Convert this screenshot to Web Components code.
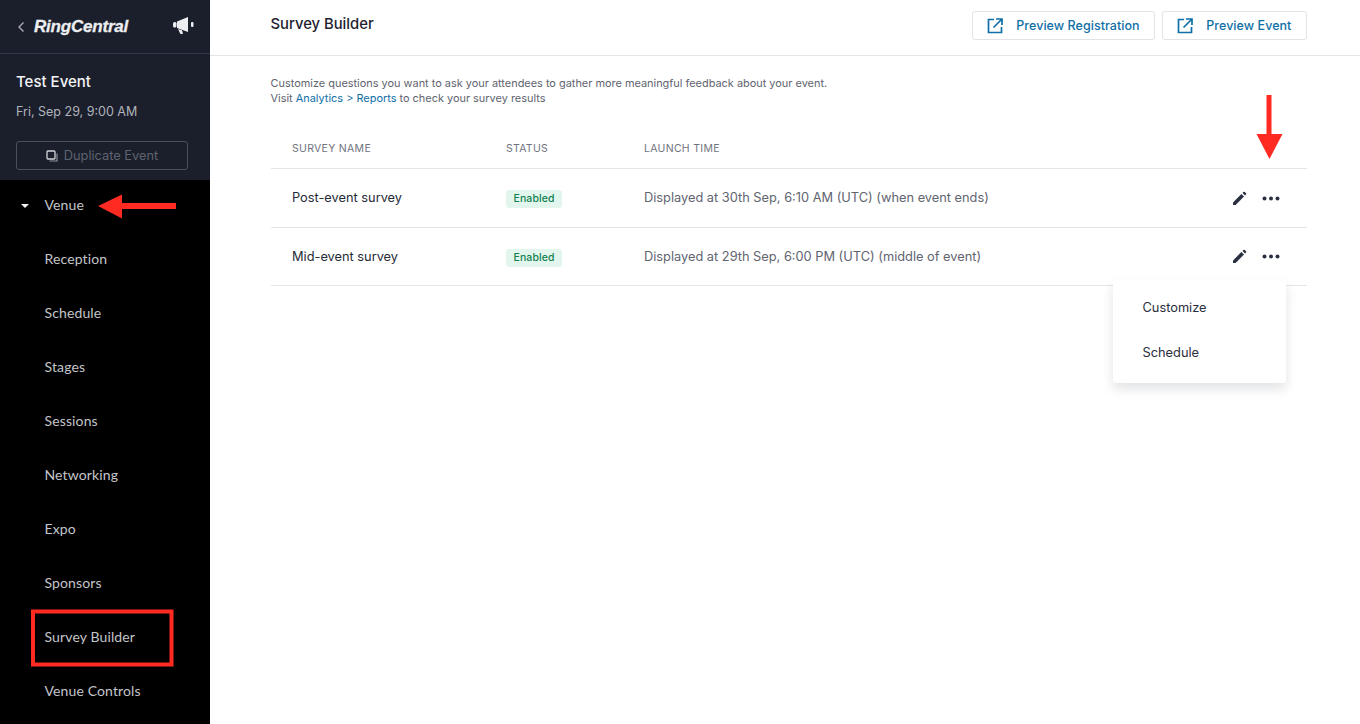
<!DOCTYPE html>
<html>
<head>
<meta charset="utf-8">
<title>Survey Builder</title>
<style>
    html, body { margin: 0; height: 100%; }
    body { font-family: Inter, "Liberation Sans", sans-serif; background: #fff; overflow: hidden; }
    app-shell { height: 724px; }
</style>
</head>
<body>
<app-shell>
    <side-bar slot="side">
        <nav-item caret>Venue</nav-item>
        <nav-item>Reception</nav-item>
        <nav-item>Schedule</nav-item>
        <nav-item>Stages</nav-item>
        <nav-item>Sessions</nav-item>
        <nav-item>Networking</nav-item>
        <nav-item>Expo</nav-item>
        <nav-item>Sponsors</nav-item>
        <nav-item>Survey Builder</nav-item>
        <nav-item>Venue Controls</nav-item>
    </side-bar>
    <top-bar heading="Survey Builder">
        <preview-button>Preview Registration</preview-button>
        <preview-button>Preview Event</preview-button>
    </top-bar>
    <survey-page>
        <survey-row name="Post-event survey" time="Displayed at 30th Sep, 6:10 AM (UTC) (when event ends)"></survey-row>
        <survey-row name="Mid-event survey" time="Displayed at 29th Sep, 6:00 PM (UTC) (middle of event)"></survey-row>
    </survey-page>
    <red-marks slot="marks"></red-marks>
</app-shell>

<script>
// Page frame
class AppShell extends HTMLElement {
    constructor() {
        super();
        this.attachShadow({ mode: 'open' }).innerHTML = `
            <style>
                :host { display: flex; position: relative; overflow: hidden; }
                main { flex: 1; min-width: 0; display: flex; flex-direction: column; }
            </style>
            <slot name="side"></slot>
            <main><slot></slot></main>
            <slot name="marks"></slot>
        `;
    }
}

class SideBar extends HTMLElement {
    constructor() {
        super();
        this.attachShadow({ mode: 'open' }).innerHTML = `
            <style>
                :host { display: flex; flex-direction: column; width: 210px; flex: none; height: 724px; background: #000; overflow: hidden; }
                .head { background: #1b1f2b; height: 180px; box-sizing: border-box; display: flex; flex-direction: column; }
                .brand { height: 54px; box-sizing: border-box; border-bottom: 1px solid #33374a; display: flex; align-items: center; padding: 0 11px 0 17px; }
                .back { width: 8px; height: 14px; margin-right: 9px; }
                .logo { font: italic 700 17px "Liberation Sans", sans-serif; letter-spacing: -0.2px; -webkit-text-stroke: 0.3px #eceef1; color: #eceef1; flex: 1; }
                .horn { width: 22px; height: 18px; margin: -4px 5px 0 0; }
                .info { padding: 0 22px 0 16px; }
                h2 { margin: 18px 0 0; font: 500 15px/20px Inter, sans-serif; color: #f3f4f6; }
                .date { margin-top: 11px; font: 400 12.5px/18px Inter, sans-serif; color: #b0b3bb; }
                .dup { margin-top: 20px; height: 29px; box-sizing: border-box; border: 1px solid #4b4f5c; border-radius: 3px; display: flex; align-items: center; justify-content: center; gap: 6px; font: 400 12.8px Inter, sans-serif; color: #5f636f; }
                .dup svg { width: 12px; height: 12px; }
                nav { display: flex; flex-direction: column; gap: 4px; margin-top: -1px; }
            </style>
            <div class="head">
                <div class="brand">
                    <svg class="back" viewBox="0 0 8 14"><path d="M6.5 2.5 2 7l4.5 4.5" fill="none" stroke="#a9acb4" stroke-width="1.4"/></svg>
                    <span class="logo">RingCentral</span>
                    <svg class="horn" viewBox="0 0 22 18" fill="#eceef1"><rect x="1" y="6" width="3.500" height="5.500" rx="1.500"/><path d="M5 5.500 16 1v15L5 12z"/><path d="M6 13l4 1.300 1 3.500-2.500.3z"/><rect x="19" y="6" width="2.500" height="5" rx="1"/></svg>
                </div>
                <div class="info">
                    <h2>Test Event</h2>
                    <div class="date">Fri, Sep 29, 9:00 AM</div>
                    <div class="dup">
                        <svg viewBox="0 0 12 12"><rect x="1" y="1" width="8" height="8" rx="1" fill="none" stroke="#d4d6db" stroke-width="1.300"/><path d="M11 3.500V11H3.500" fill="none" stroke="#8d909a" stroke-width="1.200"/></svg>
                        <span>Duplicate Event</span>
                    </div>
                </div>
            </div>
            <nav><slot></slot></nav>
        `;
    }
}

class NavItem extends HTMLElement {
    constructor() {
        super();
        this.attachShadow({ mode: 'open' }).innerHTML = `
            <style>
                :host { display: flex; align-items: center; height: 50px; padding-left: 44.5px; position: relative; font: 400 14px Lato, sans-serif; letter-spacing: 0.13px; color: #c3c5ca; }
                .caret { position: absolute; left: 21px; top: 25px; width: 0; height: 0; border: 4px solid transparent; border-top: 4px solid #f2f2f2; border-bottom: 0; }
            </style>
            ${this.hasAttribute('caret') ? '<span class="caret"></span>' : ''}
            <slot></slot>
        `;
    }
}

class TopBar extends HTMLElement {
    constructor() {
        super();
        this.attachShadow({ mode: 'open' }).innerHTML = `
            <style>
                :host { display: flex; align-items: center; height: 56px; box-sizing: border-box; border-bottom: 1px solid #e5e5e7; padding: 0 53px 5px 60.500px; }
                h1 { flex: 1; margin: 0 0 3px; font: 500 14.800px/20px Inter, sans-serif; color: #1e2230; }
                .actions { display: flex; gap: 7px; margin-top: 1px; }
            </style>
            <h1>${this.getAttribute('heading')}</h1>
            <div class="actions"><slot></slot></div>
        `;
    }
}

class PreviewButton extends HTMLElement {
    constructor() {
        super();
        this.attachShadow({ mode: 'open' }).innerHTML = `
            <style>
                :host { display: flex; align-items: center; height: 29px; box-sizing: border-box; border: 1px solid #e1e3e6; border-radius: 3px; padding: 0 14.600px 0 14px; font: 500 12.5px Inter, sans-serif; letter-spacing: 0.05px; color: #0f6fa6; }
                svg { width: 16px; height: 16px; margin-right: 13px; }
            </style>
            <svg viewBox="0 0 16 16" fill="none" stroke="#0f6fa6" stroke-width="1.700"><path d="M7 1.500H1.500v13h13V9"/><path d="M6.500 9.500 14.500 1.500M9 1h6v6" /></svg>
            <slot></slot>
        `;
    }
}

class SurveyPage extends HTMLElement {
    constructor() {
        super();
        this.attachShadow({ mode: 'open' }).innerHTML = `
            <style>
                :host { display: block; padding: 20px 53px 0 60.500px; position: relative; }
                p { margin: 0; font: 400 10.930px/15px Inter, sans-serif; color: #61646f; }
                a { color: #0f6fa6; }
                .cols { display: grid; grid-template-columns: 214px 138px 1fr; padding-left: 21.500px; margin-top: 35px; height: 27px; border-bottom: 1px solid #e5e5e7; font: 400 10.500px/15px Inter, sans-serif; letter-spacing: 0.3px; color: #70737e; }
                .menu { position: absolute; left: 902.500px; top: 224px; width: 173px; height: 103px; box-sizing: border-box; padding: 5px 30px; background: #fff; border-radius: 3px; box-shadow: 0 6px 12px rgba(20,24,40,.12); font: 400 12.800px Inter, sans-serif; color: #2a2e3c; display: grid; grid-auto-rows: 45px; align-items: center; }
            </style>
            <p>Customize questions you want to ask your attendees to gather more meaningful feedback about your event.<br>Visit <a>Analytics &gt; Reports</a> to check your survey results</p>
            <div class="cols"><span>SURVEY NAME</span><span>STATUS</span><span>LAUNCH TIME</span></div>
            <slot></slot>
            <div class="menu"><span>Customize</span><span>Schedule</span></div>
        `;
    }
}

class SurveyRow extends HTMLElement {
    constructor() {
        super();
        this.attachShadow({ mode: 'open' }).innerHTML = `
            <style>
                :host { display: grid; grid-template-columns: 214px 138px 1fr auto; align-items: center; height: 58.500px; box-sizing: border-box; border-bottom: 1px solid #e5e5e7; padding: 0 27px 1px 21.500px; }
                :host(:last-of-type) { padding-top: 1px; padding-bottom: 0; }
                .name { font: 400 12.800px Inter, sans-serif; color: #262a37; }
                .badge { justify-self: start; margin-top: 4px; background: #e3f6ee; color: #11804f; font: 500 10.500px/18px Inter, sans-serif; padding: 0 7.500px; letter-spacing: 0.1px; border-radius: 3px; }
                :host(:last-of-type) .badge { margin-top: 2px; }
                .time { font: 400 12.800px Inter, sans-serif; color: #61646f; }
                .tools { display: flex; align-items: center; gap: 15px; margin-top: 2px; }
                :host(:last-of-type) .tools { margin-top: 0; }
                svg { display: block; }
            </style>
            <span class="name">${this.getAttribute('name')}</span>
            <span class="badge">Enabled</span>
            <span class="time">${this.getAttribute('time')}</span>
            <span class="tools">
                <svg width="15" height="15" viewBox="0 0 15 15" fill="#2b3040"><path d="M1 14v-2.600L9.400 3l2.600 2.600L3.600 14z"/><path d="M10.500 1.900l.9-.9a1 1 0 0 1 1.400 0l1.200 1.200a1 1 0 0 1 0 1.400l-.9.9z"/></svg>
                <svg width="18" height="5" viewBox="0 0 18 5" fill="#2b3040"><circle cx="2.500" cy="2.500" r="2"/><circle cx="9" cy="2.500" r="2"/><circle cx="15.500" cy="2.500" r="2"/></svg>
            </span>
        `;
    }
}

// Red annotations drawn on top of the screenshot
class RedMarks extends HTMLElement {
    constructor() {
        super();
        this.attachShadow({ mode: 'open' }).innerHTML = `
            <style>
                :host { display: block; position: absolute; inset: 0; pointer-events: none; }
                svg { position: absolute; left: 0; top: 0; }
            </style>
            <svg width="1360" height="724" fill="#ff2a22">
                <path d="M98 206 122 194.500V203h54v6h-54v9.500z"/>
                <path d="M1266.500 95h5v39h11l-13 25-13-25h10z"/>
                <rect x="33" y="611.500" width="138.500" height="53" fill="none" stroke="#ff2a22" stroke-width="4"/>
            </svg>
        `;
    }
}

customElements.define('app-shell', AppShell);
customElements.define('side-bar', SideBar);
customElements.define('nav-item', NavItem);
customElements.define('top-bar', TopBar);
customElements.define('preview-button', PreviewButton);
customElements.define('survey-page', SurveyPage);
customElements.define('survey-row', SurveyRow);
customElements.define('red-marks', RedMarks);
</script>
</body>
</html>
